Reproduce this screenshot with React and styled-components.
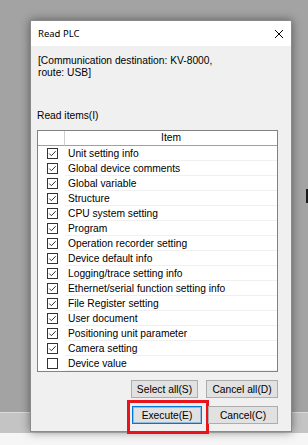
import { Fragment } from "react";
import styled, { createGlobalStyle } from "styled-components";

const GlobalStyle = createGlobalStyle`
  html, body { margin: 0; padding: 0; }
  body { font-family: "Liberation Sans", Arial, sans-serif; }
`;

const Desktop = styled.div`
  position: relative;
  width: 308px;
  height: 445px;
  overflow: hidden;
  display: flex;
  flex-direction: column;
`;

const Band = styled.div`
  height: ${(p) => p.h}px;
  background: ${(p) => p.bg};
  border-top: ${(p) => (p.line ? `1px solid ${p.line}` : "none")};
  flex: ${(p) => (p.grow ? 1 : "none")};
`;

const Stray = styled.div`
  position: absolute;
  right: 0;
  top: 189px;
  width: 2px;
  height: 14px;
  background: #1a1a1a;
`;

const Dialog = styled.div`
  position: absolute;
  left: 30px;
  top: 20px;
  width: 262px;
  height: 412px;
  box-sizing: border-box;
  border: 1px solid #8a8a8a;
  background: #f0f0f0;
  box-shadow: 0 0 9px rgba(0, 0, 0, 0.45);
  display: flex;
  flex-direction: column;
`;

const TitleBar = styled.div`
  height: 25px;
  background: #fff;
  display: flex;
  align-items: center;
  justify-content: space-between;
  padding: 0 7px 0 7px;
  font-family: "Noto Sans", sans-serif;
  font-size: 9.5px;
  color: #000;
`;

const Body = styled.div`
  flex: 1;
  padding: 9px 13px 0 6px;
  display: flex;
  flex-direction: column;
  font-size: 10.25px;
  color: #000;
`;

const Info = styled.div`
  line-height: 12px;
  padding-left: 1px;
`;

const Label = styled.div`
  margin-top: 31px;
  line-height: 12px;
`;

const Table = styled.div`
  margin-top: 8px;
  border: 1px solid #828282;
  background: #fff;
  display: grid;
  grid-template-columns: 27px 1fr;
  grid-auto-rows: 15px;
`;

const HeadCell = styled.div`
  border-bottom: 1px solid #a0a0a0;
  border-right: ${(p) => (p.first ? "1px solid #d0d0d0" : "none")};
  box-sizing: border-box;
  text-align: center;
  line-height: 14px;
`;

const CheckCell = styled.div`
  display: flex;
  align-items: center;
  justify-content: center;
  padding-left: 2px;
`;

const TextCell = styled.div`
  border-bottom: 1px solid #f0f0f0;
  box-sizing: border-box;
  padding-left: 3px;
  line-height: 15px;
  white-space: nowrap;
`;

const Buttons = styled.div`
  display: flex;
  justify-content: flex-end;
  gap: ${(p) => p.gap}px;
  margin-top: ${(p) => p.top}px;
`;

const Button = styled.div`
  position: relative;
  width: ${(p) => p.w}px;
  height: 18px;
  box-sizing: border-box;
  background: #e1e1e1;
  border: 1px solid ${(p) => (p.primary ? "#0078d7" : "#adadad")};
  box-shadow: ${(p) => (p.primary ? "inset 0 0 0 1px rgba(0,120,215,0.35)" : "none")};
  display: flex;
  align-items: center;
  justify-content: center;
  font-size: 10.25px;
`;

const Highlight = styled.div`
  position: absolute;
  left: -6px;
  top: -7px;
  width: 82px;
  height: 34px;
  box-sizing: border-box;
  border: 3px solid #e8141c;
`;

const items = [
  "Unit setting info",
  "Global device comments",
  "Global variable",
  "Structure",
  "CPU system setting",
  "Program",
  "Operation recorder setting",
  "Device default info",
  "Logging/trace setting info",
  "Ethernet/serial function setting info",
  "File Register setting",
  "User document",
  "Positioning unit parameter",
  "Camera setting",
  "Device value",
];

const Check = ({ on }) => (
  <svg width="11" height="11" viewBox="0 0 11 11">
    <rect x="0.5" y="0.5" width="10" height="10" fill="#fff" stroke="#333" />
    {on && <path d="M2.3 5.6 L4.4 7.7 L8.7 3.2" fill="none" stroke="#333" strokeWidth="1" />}
  </svg>
);

const Close = () => (
  <svg width="10" height="10" viewBox="0 0 10 10">
    <path d="M1 1 L9 9 M9 1 L1 9" stroke="#000" strokeWidth="1" />
  </svg>
);

export default function App() {
  return (
    <>
      <GlobalStyle />
      <Desktop>
        <Band h={412} bg="#a3a3a3" />
        <Band h={20} bg="#c4c4c4" line="#dcdcdc" />
        <Band grow bg="#f6f6f6" />
        <Stray />
        <Dialog>
          <TitleBar>
            <span>Read PLC</span>
            <Close />
          </TitleBar>
          <Body>
            <Info>
              [Communication destination: KV-8000,
              <br />
              route: USB]
            </Info>
            <Label>Read items(I)</Label>
            <Table>
              <HeadCell first />
              <HeadCell>Item</HeadCell>
              {items.map((it, i) => (
                <Fragment key={it}>
                  <CheckCell>
                    <Check on={i < items.length - 1} />
                  </CheckCell>
                  <TextCell>{it}</TextCell>
                </Fragment>
              ))}
            </Table>
            <Buttons gap={8} top={8}>
              <Button w={67}>Select all(S)</Button>
              <Button w={72}>Cancel all(D)</Button>
            </Buttons>
            <Buttons gap={6} top={8}>
              <Button w={70} primary>
                Execute(E)
                <Highlight />
              </Button>
              <Button w={70}>Cancel(C)</Button>
            </Buttons>
          </Body>
        </Dialog>
      </Desktop>
    </>
  );
}
